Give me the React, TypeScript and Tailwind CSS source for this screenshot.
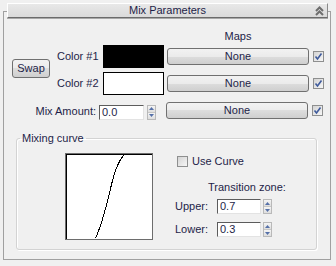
import React from "react";

const btn =
  "border border-[#707070] rounded-[3px] bg-[linear-gradient(#f2f2f2_0%,#ebebeb_50%,#dddddd_50%,#cfcfcf_100%)] flex items-center justify-center";

function Check({ checked }: { checked: boolean }) {
  return (
    <div className="w-[11px] h-[11px] border border-[#8e8f8f] bg-[linear-gradient(135deg,#d4d4d4,#f6f6f6)] flex items-center justify-center shrink-0">
      {checked && (
        <svg width="9" height="9" viewBox="0 0 9 9">
          <path d="M1.5 4.5 L3.5 7 L7.5 1.5" fill="none" stroke="#3f5b9c" strokeWidth="1.6" />
        </svg>
      )}
    </div>
  );
}

function Spinner() {
  return (
    <div className="w-[9px] h-[15px] flex flex-col border border-[#b9b9b9] bg-[#e6e6e6] shrink-0">
      <div className="flex-1 flex items-center justify-center border-b border-[#c6c6c6] bg-[linear-gradient(#f4f4f4,#dedede)]">
        <svg width="5" height="3" viewBox="0 0 5 3">
          <path d="M0 3 L2.5 0 L5 3 Z" fill="#5570a8" />
        </svg>
      </div>
      <div className="flex-1 flex items-center justify-center bg-[linear-gradient(#f4f4f4,#dedede)]">
        <svg width="5" height="3" viewBox="0 0 5 3">
          <path d="M0 0 L2.5 3 L5 0 Z" fill="#5570a8" />
        </svg>
      </div>
    </div>
  );
}

function Field({ value, w }: { value: string; w: string }) {
  return (
    <div
      className={`${w} h-[15px] bg-white border-t border-l border-[#5c5c5c] border-b-[#e3e3e3] border-r-[#e3e3e3] border-b border-r pl-[2px] leading-[13px] shrink-0`}
    >
      {value}
    </div>
  );
}

export default function App() {
  return (
    <div className="w-[336px] h-[266px] bg-[#f0f0f0] pt-[3px] overflow-hidden font-['Liberation_Sans',Arial,sans-serif] text-[11px] leading-[13px] text-[#1e1e48]">
      {/* header */}
      <div className="relative z-10 ml-[7px] w-[321px] h-[15px] border-t border-l border-white border-r border-r-[#8a8a8a] border-b border-b-[#6b6b6b] shadow-[0_1px_0_#a8a8a8] bg-[linear-gradient(#e8e8e8,#dadada)] grid grid-cols-[20px_1fr_20px] items-center">
        <div />
        <div className="text-center">Mix Parameters</div>
        <div className="flex justify-end pr-[3px]">
          <svg width="9" height="10" viewBox="0 0 9 10">
            <path d="M1 5 L4.5 1.5 L8 5 M1 9 L4.5 5.5 L8 9" fill="none" stroke="#6e6e6e" strokeWidth="2" />
          </svg>
        </div>
      </div>

      {/* frame */}
      <div className="mt-[-7px] ml-[3px] w-[328px] h-[249px] border border-[#a0a0a0]">
        {/* Maps */}
        <div className="mt-[18px] ml-[163px] w-[142px] text-center">Maps</div>

        {/* color rows */}
        <div className="flex">
          <div className="w-[53px] flex items-center">
            <div className={`${btn} ml-[8px] mb-[3px] w-[38px] h-[19px]`}>Swap</div>
          </div>
          <div className="flex flex-col">
            {[
              { label: "Color #1", sw: "bg-black" },
              { label: "Color #2", sw: "bg-white border border-black" },
            ].map((r) => (
              <div key={r.label} className="h-[27px] flex items-center">
                <div className="w-[46px]">{r.label}</div>
                <div className={`w-[61px] h-[23px] ${r.sw}`} />
                <div className={`${btn} ml-[3px] w-[142px] h-[17px]`}>None</div>
                <div className="ml-[4px]">
                  <Check checked />
                </div>
              </div>
            ))}
          </div>
        </div>

        {/* mix amount row */}
        <div className="h-[27px] flex items-center">
          <div className="w-[95px] text-right pr-[3px] mt-[2px]">Mix Amount:</div>
          <div className="flex items-center mt-[3px]">
            <Field value="0.0" w="w-[45px]" />
            <div className="ml-[3px]">
              <Spinner />
            </div>
          </div>
          <div className={`${btn} ml-[10px] w-[142px] h-[17px]`}>None</div>
          <div className="ml-[4px]">
            <Check checked />
          </div>
        </div>

        {/* mixing curve group */}
        <fieldset className="mt-[8px] ml-[12px] w-[301px] h-[118px] border border-[#d3d3d3] rounded-[3px] shadow-[inset_1px_1px_0_#fff,1px_1px_0_#fff]">
          <legend className="ml-[3px] px-[2px]">Mixing curve</legend>
          <div className="flex items-start">
            <div className="ml-[48px] mt-[8px] w-[88px] h-[87px] border border-[#6d6d6d] shrink-0">
              <div className="w-full h-full border-t border-l border-black bg-white">
                <svg width="85" height="84" viewBox="0 0 85 84" className="block">
                  <path
                    d="M28.5 83 C 34 72, 37 60, 41 44 S 48 10, 57 0"
                    fill="none"
                    stroke="#000"
                    strokeWidth="1"
                    shapeRendering="crispEdges"
                  />
                </svg>
              </div>
            </div>
            <div className="ml-[22px] mt-[10px] flex flex-col">
              <div className="flex items-center">
                <div className="ml-[2px]">
                  <Check checked={false} />
                </div>
                <div className="ml-[4px]">Use Curve</div>
              </div>
              <div className="mt-[13px] ml-[33px]">Transition zone:</div>
              <div className="mt-[5px] flex items-center">
                <div className="w-[42px]">Upper:</div>
                <Field value="0.7" w="w-[44px]" />
                <div className="ml-[2px]">
                  <Spinner />
                </div>
              </div>
              <div className="mt-[8px] flex items-center">
                <div className="w-[42px]">Lower:</div>
                <Field value="0.3" w="w-[44px]" />
                <div className="ml-[2px]">
                  <Spinner />
                </div>
              </div>
            </div>
          </div>
        </fieldset>
      </div>
    </div>
  );
}
